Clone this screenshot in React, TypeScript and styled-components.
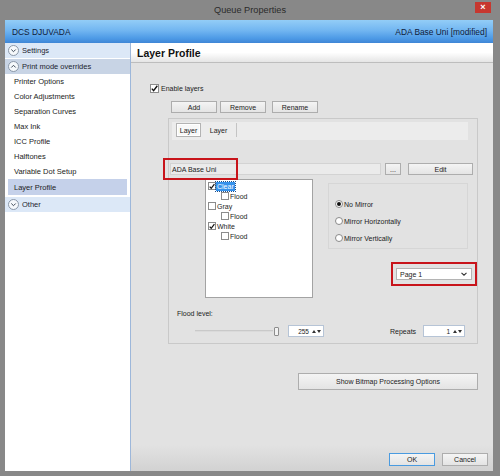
import styled, { createGlobalStyle } from "styled-components";

const Global = createGlobalStyle`
  html, body { margin: 0; padding: 0; }
  body {
    width: 500px;
    height: 476px;
    overflow: hidden;
    background: #878787;
    font-family: "Liberation Sans", Arial, sans-serif;
    color: #1c1c1c;
  }
  * { box-sizing: border-box; }
`;

const Window = styled.div`
  width: 500px;
  height: 476px;
  display: flex;
  flex-direction: column;
  background: #888888;
`;

const TitleBar = styled.div`
  height: 20px;
  flex: none;
  display: grid;
  grid-template-columns: 1fr auto 1fr;
  align-items: center;
  font-size: 9.2px;
  color: #2b2b2b;
`;

const CloseButton = styled.div`
  justify-self: end;
  align-self: start;
  margin: 2px 9px 0 0;
  width: 16px;
  height: 11px;
  background: #c7372f;
  color: #fff;
  font-size: 9px;
  font-weight: bold;
  display: flex;
  align-items: center;
  justify-content: center;
  line-height: 1;
`;

const Frame = styled.div`
  flex: 1;
  display: flex;
  flex-direction: column;
  padding: 0 7px 5px 5px;
  min-height: 0;
`;

const BlueHeader = styled.div`
  height: 23px;
  flex: none;
  display: flex;
  align-items: center;
  justify-content: space-between;
  padding: 0 6px 0 7px;
  font-size: 8.4px;
  color: #10203a;
  background: linear-gradient(#93cdf7 0%, #72b6f1 45%, #4d9ae6 80%, #3f86d6 100%);
`;

const Body = styled.div`
  flex: 1;
  display: flex;
  min-height: 0;
`;

const Sidebar = styled.div`
  width: 126px;
  flex: none;
  background: #ffffff;
  border-right: 1px solid #9db7da;
  display: flex;
  flex-direction: column;
  font-size: 7.5px;
`;

const SectionHeader = styled.div<{ $dark?: boolean; $top?: number }>`
  height: 15px;
  margin-top: ${(p) => p.$top ?? 0}px;
  display: flex;
  align-items: center;
  gap: 3px;
  padding-left: 3px;
  background: ${(p) => (p.$dark ? "#c8d4e5" : "#dce8f7")};
  color: #1c2430;
`;

const ItemList = styled.div`
  margin: 0 3px;
  display: flex;
  flex-direction: column;
`;

const Item = styled.div<{ $selected?: boolean }>`
  height: ${(p) => (p.$selected ? 16 : 15)}px;
  display: flex;
  align-items: center;
  padding-left: 6px;
  background: ${(p) => (p.$selected ? "#c5d1ea" : "transparent")};
  color: #222;
`;

const Main = styled.div`
  flex: 1;
  min-width: 0;
  display: flex;
  flex-direction: column;
  background: #e2e2e2;
`;

const PageHeader = styled.div`
  height: 20px;
  flex: none;
  display: flex;
  align-items: center;
  padding-left: 6px;
  font-size: 10.5px;
  font-weight: bold;
  color: #111;
  background: linear-gradient(#ffffff 0%, #ffffff 50%, #e5e5e5 100%);
  border-bottom: 1px solid #bdbdbd;
`;

const Content = styled.div`
  flex: 1;
  display: flex;
  flex-direction: column;
  font-size: 7px;
  min-height: 0;
`;

const EnableRow = styled.label`
  margin: 20px 0 0 19px;
  height: 10px;
  display: flex;
  align-items: center;
  gap: 2px;
`;

const ButtonRow = styled.div`
  margin: 8px 0 0 40px;
  display: flex;
  gap: 3px;
`;

const Button = styled.div<{ $w: number; $h?: number; $focus?: boolean; $ml?: number }>`
  width: ${(p) => p.$w}px;
  height: ${(p) => p.$h ?? 12}px;
  margin-left: ${(p) => p.$ml ?? 0}px;
  flex: none;
  display: flex;
  align-items: center;
  justify-content: center;
  border: 1px solid ${(p) => (p.$focus ? "#4a9be0" : "#adadad")};
  background: linear-gradient(#f4f4f4, #e4e4e4);
  color: #1b1b1b;
  font-size: 7px;
`;

const TabPanel = styled.div`
  margin: 5px 15px 0 37px;
  height: 226px;
  flex: none;
  position: relative;
  border: 1px solid #c9c9c9;
  display: flex;
  flex-direction: column;
`;

const TabStrip = styled.div`
  margin: 3px 9px 0 3px;
  height: 18px;
  background: #ececec;
  display: flex;
  align-items: flex-start;
  padding: 1px 0 0 4px;
`;

const Tab = styled.div<{ $active?: boolean; $w: number }>`
  width: ${(p) => p.$w}px;
  height: 14px;
  display: flex;
  align-items: center;
  justify-content: center;
  ${(p) =>
    p.$active
      ? "background: #f8f8f8; border: 1px solid #b3b3b3; box-shadow: inset 0 0 0 1px #ffffff;"
      : "border-right: 1px solid #c4c4c4;"}
`;

const NameRow = styled.div`
  margin: 23px 0 0 1px;
  height: 12px;
  display: flex;
  position: relative;
`;

const TextField = styled.div<{ $w: number }>`
  width: ${(p) => p.$w}px;
  height: 100%;
  display: flex;
  align-items: center;
  padding-left: 1px;
  background: #ebebeb;
  border: 1px solid #d3d3d3;
  color: #222;
`;

const Highlight = styled.div<{ $l: number; $t: number; $w: number; $h: number }>`
  position: absolute;
  left: ${(p) => p.$l}px;
  top: ${(p) => p.$t}px;
  width: ${(p) => p.$w}px;
  height: ${(p) => p.$h}px;
  border: 2px solid #c8141b;
  pointer-events: none;
`;

const Middle = styled.div`
  margin-top: 4px;
  display: flex;
`;

const TreeBox = styled.div`
  margin-left: 36px;
  width: 108px;
  height: 119px;
  background: #ffffff;
  border: 1px solid #a3a3a3;
  padding: 1px 0 0 2px;
  display: flex;
  flex-direction: column;
`;

const TreeRow = styled.div<{ $indent?: boolean }>`
  height: 10px;
  display: flex;
  align-items: center;
  padding-left: ${(p) => (p.$indent ? 13 : 0)}px;
`;

const TreeLabel = styled.span<{ $selected?: boolean }>`
  padding: 0 1px;
  line-height: 9px;
  ${(p) => (p.$selected ? "background: #3592ec; color: #fff; outline: 1px dotted #1d4f8a;" : "")}
`;

const Box = styled.span<{ $size?: number }>`
  width: ${(p) => p.$size ?? 8}px;
  height: ${(p) => p.$size ?? 8}px;
  flex: none;
  background: #ffffff;
  border: 1px solid #8c8c8c;
  display: flex;
  align-items: center;
  justify-content: center;
`;

const RightCol = styled.div`
  margin-left: 15px;
  display: flex;
  flex-direction: column;
`;

const RadioGroup = styled.div`
  margin-top: 4px;
  width: 140px;
  height: 66px;
  border: 1px solid #d6d6d6;
  padding: 15px 0 0 6px;
  display: flex;
  flex-direction: column;
  gap: 7px;
`;

const RadioRow = styled.div`
  height: 10px;
  display: flex;
  align-items: center;
  gap: 1px;
`;

const Radio = styled.span<{ $on?: boolean }>`
  width: 8px;
  height: 8px;
  border-radius: 50%;
  border: 1px solid #8a8a8a;
  background: #fff;
  display: flex;
  align-items: center;
  justify-content: center;
  &::after {
    content: "";
    width: 4px;
    height: 4px;
    border-radius: 50%;
    background: ${(p) => (p.$on ? "#111" : "transparent")};
  }
`;

const DropWrap = styled.div`
  margin: 19px 0 0 68px;
  position: relative;
`;

const Dropdown = styled.div`
  width: 76px;
  height: 12px;
  background: #ffffff;
  border: 1px solid #b4b4b4;
  display: flex;
  align-items: center;
  justify-content: space-between;
  padding: 0 4px 0 3px;
`;

const FloodLabel = styled.div`
  margin: 10px 0 0 8px;
  height: 10px;
  display: flex;
  align-items: center;
`;

const SliderRow = styled.div`
  margin-top: 7px;
  height: 12px;
  display: flex;
  align-items: center;
`;

const Slider = styled.div`
  margin-left: 26px;
  width: 84px;
  height: 12px;
  display: flex;
  align-items: center;
`;

const Track = styled.div`
  flex: 1;
  height: 2px;
  background: #dadada;
  border-top: 1px solid #c9c9c9;
`;

const Thumb = styled.div`
  width: 5px;
  height: 9px;
  margin-left: 1px;
  border: 1px solid #8d8d8d;
  border-radius: 1px;
  background: #f2f2f2;
`;

const Spin = styled.div<{ $w: number; $ml: number }>`
  width: ${(p) => p.$w}px;
  height: 12px;
  margin-left: ${(p) => p.$ml}px;
  background: #ffffff;
  border: 1px solid #b6c4d6;
  display: flex;
  align-items: center;
  justify-content: flex-end;
  gap: 3px;
  padding-right: 2px;
  font-size: 6.5px;
`;

const Label = styled.span<{ $ml?: number }>`
  margin-left: ${(p) => p.$ml ?? 0}px;
`;

const BitmapButton = styled(Button)`
  margin: 29px 15px 0 auto;
`;

const Spacer = styled.div`
  flex: 1;
`;

const Footer = styled.div`
  height: 26px;
  flex: none;
  display: flex;
  justify-content: flex-end;
  align-items: flex-start;
  gap: 7px;
  padding: 8px 5px 0 0;
  background: linear-gradient(#e2e2e2, #d2d2d2);
`;

function Check() {
  return (
    <svg width="7" height="7" viewBox="0 0 7 7">
      <polyline points="0.8,3.6 2.6,5.6 6.3,0.8" fill="none" stroke="#111" strokeWidth="1.4" />
    </svg>
  );
}

function CheckBox({ on, size }: { on?: boolean; size?: number }) {
  return <Box $size={size}>{on && <Check />}</Box>;
}

function Chevron({ up }: { up?: boolean }) {
  return (
    <svg width="11" height="11" viewBox="0 0 11 11">
      <circle cx="5.5" cy="5.5" r="5" fill="#f6f9fc" stroke="#8a97a8" />
      <polyline
        points={up ? "3.3,6.5 5.5,4.3 7.7,6.5" : "3.3,4.5 5.5,6.7 7.7,4.5"}
        fill="none"
        stroke="#3f4b5a"
        strokeWidth="1"
      />
    </svg>
  );
}

function SpinArrows() {
  return (
    <svg width="9" height="4" viewBox="0 0 9 4">
      <polygon points="0,4 2,1 4,4" fill="#333" />
      <polygon points="5,1 9,1 7,4" fill="#333" />
    </svg>
  );
}

const sidebarItems = [
  "Printer Options",
  "Color Adjustments",
  "Separation Curves",
  "Max Ink",
  "ICC Profile",
  "Halftones",
  "Variable Dot Setup",
];

export default function App() {
  return (
    <>
      <Global />
      <Window>
        <TitleBar>
          <span />
          <span>Queue Properties</span>
          <CloseButton>×</CloseButton>
        </TitleBar>
        <Frame>
          <BlueHeader>
            <span>DCS DJUVADA</span>
            <span>ADA Base Uni [modified]</span>
          </BlueHeader>
          <Body>
            <Sidebar>
              <SectionHeader>
                <Chevron />
                Settings
              </SectionHeader>
              <SectionHeader $dark $top={1}>
                <Chevron up />
                Print mode overrides
              </SectionHeader>
              <ItemList>
                {sidebarItems.map((s) => (
                  <Item key={s}>{s}</Item>
                ))}
                <Item $selected>Layer Profile</Item>
              </ItemList>
              <SectionHeader $top={2}>
                <Chevron />
                Other
              </SectionHeader>
            </Sidebar>
            <Main>
              <PageHeader>Layer Profile</PageHeader>
              <Content>
                <EnableRow>
                  <CheckBox on size={9} />
                  Enable layers
                </EnableRow>
                <ButtonRow>
                  <Button $w={46}>Add</Button>
                  <Button $w={46}>Remove</Button>
                  <Button $w={46} $ml={3}>Rename</Button>
                </ButtonRow>
                <TabPanel>
                  <TabStrip>
                    <Tab $active $w={25}>Layer</Tab>
                    <Tab $w={36}>Layer</Tab>
                  </TabStrip>
                  <NameRow>
                    <TextField $w={211}>ADA Base Uni</TextField>
                    <Button $w={16} $ml={4}>...</Button>
                    <Button $w={65} $ml={7}>Edit</Button>
                    <Highlight $l={-7} $t={-5} $w={75} $h={22} />
                  </NameRow>
                  <Middle>
                    <TreeBox>
                      <TreeRow>
                        <CheckBox on />
                        <TreeLabel $selected>Clear</TreeLabel>
                      </TreeRow>
                      <TreeRow $indent>
                        <CheckBox />
                        <TreeLabel>Flood</TreeLabel>
                      </TreeRow>
                      <TreeRow>
                        <CheckBox />
                        <TreeLabel>Gray</TreeLabel>
                      </TreeRow>
                      <TreeRow $indent>
                        <CheckBox />
                        <TreeLabel>Flood</TreeLabel>
                      </TreeRow>
                      <TreeRow>
                        <CheckBox on />
                        <TreeLabel>White</TreeLabel>
                      </TreeRow>
                      <TreeRow $indent>
                        <CheckBox />
                        <TreeLabel>Flood</TreeLabel>
                      </TreeRow>
                    </TreeBox>
                    <RightCol>
                      <RadioGroup>
                        <RadioRow>
                          <Radio $on />
                          No Mirror
                        </RadioRow>
                        <RadioRow>
                          <Radio />
                          Mirror Horizontally
                        </RadioRow>
                        <RadioRow>
                          <Radio />
                          Mirror Vertically
                        </RadioRow>
                      </RadioGroup>
                      <DropWrap>
                        <Dropdown>
                          <span>Page 1</span>
                          <svg width="6" height="4" viewBox="0 0 6 4">
                            <polyline points="0.5,0.8 3,3.2 5.5,0.8" fill="none" stroke="#333" strokeWidth="1.1" />
                          </svg>
                        </Dropdown>
                        <Highlight $l={-5} $t={-6} $w={86} $h={24} />
                      </DropWrap>
                    </RightCol>
                  </Middle>
                  <FloodLabel>Flood level:</FloodLabel>
                  <SliderRow>
                    <Slider>
                      <Track />
                      <Thumb />
                    </Slider>
                    <Spin $w={36} $ml={9}>
                      255
                      <SpinArrows />
                    </Spin>
                    <Label $ml={66}>Repeats</Label>
                    <Spin $w={42} $ml={7}>
                      1
                      <SpinArrows />
                    </Spin>
                  </SliderRow>
                </TabPanel>
                <BitmapButton $w={180} $h={17}>Show Bitmap Processing Options</BitmapButton>
                <Spacer />
                <Footer>
                  <Button $w={46} $h={13} $focus>OK</Button>
                  <Button $w={46} $h={13}>Cancel</Button>
                </Footer>
              </Content>
            </Main>
          </Body>
        </Frame>
      </Window>
    </>
  );
}
